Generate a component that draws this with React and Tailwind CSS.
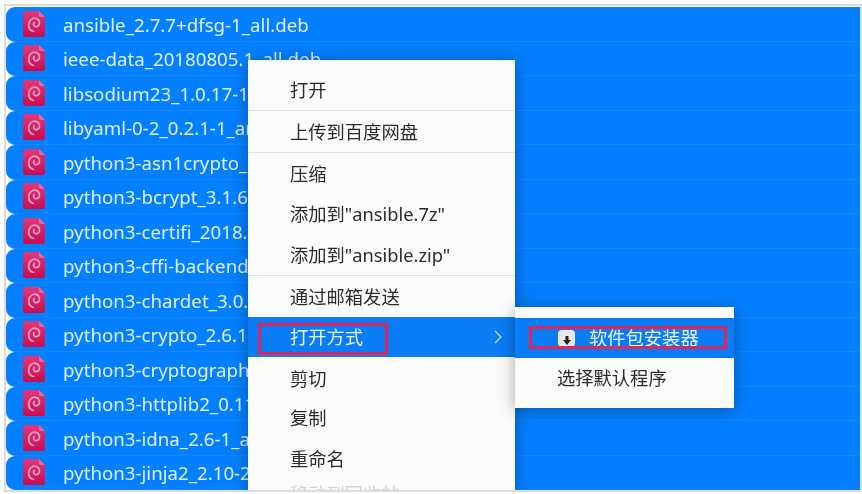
const files = [
  "ansible_2.7.7+dfsg-1_all.deb",
  "ieee-data_20180805.1_all.deb",
  "libsodium23_1.0.17-1_amd64.deb",
  "libyaml-0-2_0.2.1-1_amd64.deb",
  "python3-asn1crypto_0.24.0-1_all.deb",
  "python3-bcrypt_3.1.6-1_amd64.deb",
  "python3-certifi_2018.8.24-1_all.deb",
  "python3-cffi-backend_1.12.2-1_amd64.deb",
  "python3-chardet_3.0.4-3_all.deb",
  "python3-crypto_2.6.1-9_amd64.deb",
  "python3-cryptography_2.6.1-3_amd64.deb",
  "python3-httplib2_0.11.3-2_all.deb",
  "python3-idna_2.6-1_all.deb",
  "python3-jinja2_2.10-2_all.deb",
];

const font = { fontFamily: '"Noto Sans", "Noto Sans CJK SC", sans-serif' };

function DebIcon() {
  return (
    <svg width="22" height="26" viewBox="0 0 22 26" className="shrink-0">
      <defs>
        <linearGradient id="debg" x1="0" y1="0" x2="0" y2="1">
          <stop offset="0" stopColor="#e0387e" />
          <stop offset="1" stopColor="#c70d4f" />
        </linearGradient>
      </defs>
      <path d="M2.5 0H16l6 6v17.500a2.500 2.500 0 0 1-2.500 2.500h-17A2.500 2.500 0 0 1 0 23.500V2.500A2.500 2.500 0 0 1 2.500 0Z" fill="url(#debg)" />
      <path d="M16 0l6 6h-4a2 2 0 0 1-2-2Z" fill="#e9689b" />
      <path d="M10.500 20.500C7.200 19.500 5.300 16.500 5.700 13 6.100 9.300 9.300 6.700 12.600 7.300c3 .5 4.500 3.300 3.700 5.900-.7 2.100-3 3-4.700 2-1.300-.8-1.500-2.600-.4-3.600" fill="none" stroke="#f2a3c3" strokeWidth="1.700" strokeLinecap="round" />
    </svg>
  );
}

function Item({ children, active, arrow, boxed, className = "" }) {
  return (
    <div className={`relative flex h-[40.500px] shrink-0 items-center pl-[42px] pr-4 text-[18.300px] ${active ? "bg-[#0a7cf5] text-[#eaf4ff]" : "text-[#2b2b2b]"} ${className}`}>
      {children}
      {arrow && (
        <svg width="8" height="14" viewBox="0 0 8 14" className="absolute right-[13px] top-[13px]">
          <path d="M1 1l6 6-6 6" fill="none" stroke="#cfe4ff" strokeWidth="1.200" />
        </svg>
      )}
      {boxed && <div className="absolute left-[10px] top-[6px] h-[32px] w-[130px] border-[3px] border-[#e2245c]" />}
    </div>
  );
}

const Sep = () => <div className="h-[1.500px] shrink-0 bg-[#e2e2e2]" />;

export default function App() {
  return (
    <div className="h-[494px] w-[862px] overflow-hidden bg-white blur-[0.75px]" style={font}>
      <div className="relative ml-1 mt-1 h-[488px] w-[858px] overflow-hidden border-2 border-[#dcdcdc] bg-white pt-px">
        {files.map((f) => (
          <div key={f} className="flex h-[34.500px] items-center gap-[18px] overflow-hidden whitespace-nowrap rounded-l-[9px] border-b border-[#1a84ff] bg-[#0380ff] pl-[17px] text-[18.700px] text-[#e3efff]">
            <DebIcon />
            <span className="pt-[2px]">{f}</span>
          </div>
        ))}

        <div className="absolute left-[242px] top-[54px] flex h-[440px] w-[267px] flex-col overflow-hidden bg-[#fcfcfc] pt-[9px] shadow-[0_2px_16px_rgba(0,0,0,0.35)]">
          <Item>打开</Item>
          <Sep />
          <Item>上传到百度网盘</Item>
          <Sep />
          <Item>压缩</Item>
          <Item>添加到"ansible.7z"</Item>
          <Item>添加到"ansible.zip"</Item>
          <Sep />
          <Item>通过邮箱发送</Item>
          <Item active arrow boxed>打开方式</Item>
          <Item className="pt-[2px]">剪切</Item>
          <Item>复制</Item>
          <Item>重命名</Item>
          <Item className="-mt-[5px]"><span className="text-[#d4d4d4]">移动到回收站</span></Item>
        </div>

        <div className="absolute left-[509px] top-[301px] flex h-[101px] w-[219px] flex-col bg-[#fcfcfc] pt-[11px] shadow-[0_2px_16px_rgba(0,0,0,0.35)]">
          <div className="relative flex h-[40px] shrink-0 items-center gap-[14px] bg-[#0a7cf5] pl-[43px] text-[18.300px] text-[#eaf4ff]">
            <span className="flex h-[17px] w-[17px] items-end justify-center rounded-sm bg-[#e9e9e9] pb-[2px]">
              <svg width="8" height="9" viewBox="0 0 8 9"><path d="M2.500 0h3v4H8L4 9 0 4h2.500Z" fill="#222" /></svg>
            </span>
            <span>软件包安装器</span>
            <div className="absolute left-[14px] top-[8px] h-[23px] w-[198px] border-[3px] border-[#e2245c]" />
          </div>
          <div className="flex h-[40px] shrink-0 items-center pl-[42px] text-[18.300px] text-[#2b2b2b]">选择默认程序</div>
        </div>
      </div>
    </div>
  );
}
